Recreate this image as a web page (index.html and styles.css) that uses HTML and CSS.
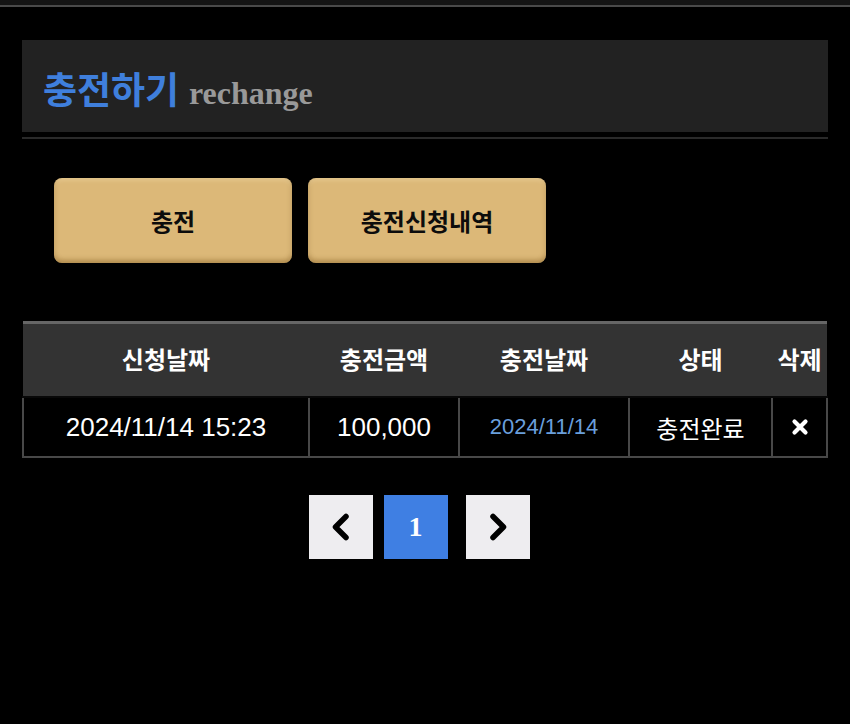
FILE: index.html
```html
<!DOCTYPE html>
<html lang="ko">

<head>
    <meta charset="UTF-8">
    <meta name="viewport" content="width=device-width, initial-scale=1.0">
    <title>충전하기</title>
    <link rel="stylesheet" href="styles.css">
</head>

<body>

    <!-- top strip -->
    <div class="topbar"></div>

    <div class="wrap">
        <!-- page title -->
        <div class="title-box">
            <h2><span class="ko">충전하기</span> <span class="en">rechange</span></h2>
        </div>
        <div class="title-line"></div>

        <!-- tab buttons -->
        <div class="tabs">
            <button class="tab-btn">충전</button>
            <button class="tab-btn">충전신청내역</button>
        </div>

        <!-- charge history -->
        <table class="list">
            <colgroup>
                <col style="width: 286px">
                <col style="width: 150px">
                <col style="width: 170px">
                <col style="width: 143px">
                <col>
            </colgroup>
            <thead>
                <tr>
                    <th>신청날짜</th>
                    <th>충전금액</th>
                    <th>충전날짜</th>
                    <th>상태</th>
                    <th>삭제</th>
                </tr>
            </thead>
            <tbody>
                <tr>
                    <td class="num">2024/11/14 15:23</td>
                    <td class="num">100,000</td>
                    <td class="date">2024/11/14</td>
                    <td class="state">충전완료</td>
                    <td class="del">
                        <svg width="18" height="18" viewBox="0 0 18 18">
                            <path d="M3.5 3.5 L14.5 14.5 M14.5 3.5 L3.5 14.5" stroke="#fff" stroke-width="4.2" stroke-linecap="round" />
                        </svg>
                    </td>
                </tr>
            </tbody>
        </table>

        <!-- paging -->
        <div class="paging">
            <a class="page prev">
                <svg width="20" height="28" viewBox="0 0 20 28">
                    <polyline points="15,3.5 4.5,14 15,24.5" fill="none" stroke="#000" stroke-width="5.5" stroke-linecap="round" stroke-linejoin="round" />
                </svg>
            </a>
            <a class="page current">1</a>
            <a class="page next">
                <svg width="20" height="28" viewBox="0 0 20 28">
                    <polyline points="5,3.5 15.5,14 5,24.5" fill="none" stroke="#000" stroke-width="5.5" stroke-linecap="round" stroke-linejoin="round" />
                </svg>
            </a>
        </div>
    </div>

</body>

</html>
```

FILE: styles.css
```css
body {
    margin: 0;
    background-color: #000;
    color: #fff;
    font-family: "Noto Sans CJK KR", "Noto Sans", sans-serif;
}

.topbar {
    height: 5px;
    background-color: #141414;
    border-bottom: 2px solid #4a4a4a;
}

.wrap {
    padding: 33px 22px 0;
}

.title-box {
    height: 92px;
    background-color: #222;
    display: flex;
    align-items: center;
    padding-left: 21px;
}

.title-box h2 {
    margin: 0;
    padding-top: 6px;
    line-height: 1;
}

.title-box .ko {
    color: #3f7fdc;
    font-size: 37px;
    font-weight: bold;
}

.title-box .en {
    color: #999;
    font-family: "Liberation Serif", serif;
    font-size: 32px;
    font-weight: bold;
    margin-left: 3px;
}

.title-line {
    height: 2px;
    margin-top: 5px;
    background-color: #2a2a2a;
}

.tabs {
    display: flex;
    gap: 16px;
    margin: 39px 0 0 32px;
}

.tab-btn {
    width: 238px;
    height: 85px;
    background-color: #dcb878;
    color: #0c0c0c;
    border: none;
    border-radius: 8px;
    box-shadow: inset 0 -3px 5px rgba(120, 80, 20, 0.45), inset 0 2px 4px rgba(255, 240, 200, 0.35);
    font-family: "Noto Sans CJK KR", sans-serif;
    font-size: 24px;
    font-weight: bold;
    cursor: pointer;
}

.list {
    width: 806px;
    margin-top: 58px;
    border-collapse: collapse;
    table-layout: fixed;
    border-top: 3px solid #666;
}

.list th {
    height: 68px;
    background-color: #333;
    font-size: 24px;
    font-weight: bold;
    padding: 0 0 4px;
    border-bottom: 2px solid #080808;
}

.list td {
    height: 58px;
    border: 2px solid #484848;
    background-color: #000;
    text-align: center;
    padding: 0;
}

.list .num {
    font-family: "Liberation Sans", sans-serif;
    font-size: 26px;
}

.list .date {
    font-family: "Liberation Sans", sans-serif;
    font-size: 22px;
    color: #6a9fdc;
}

.list .state {
    font-size: 24px;
}

.list .del svg {
    display: block;
    margin: 0 auto;
}

.paging {
    display: flex;
    justify-content: center;
    margin-top: 37px;
    padding-right: 12px;
}

.page {
    width: 64px;
    height: 64px;
    display: flex;
    align-items: center;
    justify-content: center;
    background-color: #eeedf0;
    margin: 0 7px;
}

.page.current {
    background-color: #3f7fe3;
    color: #fff;
    font-family: "Liberation Serif", serif;
    font-size: 28px;
    font-weight: bold;
    margin-left: 4px;
    margin-right: 11px;
}
```
